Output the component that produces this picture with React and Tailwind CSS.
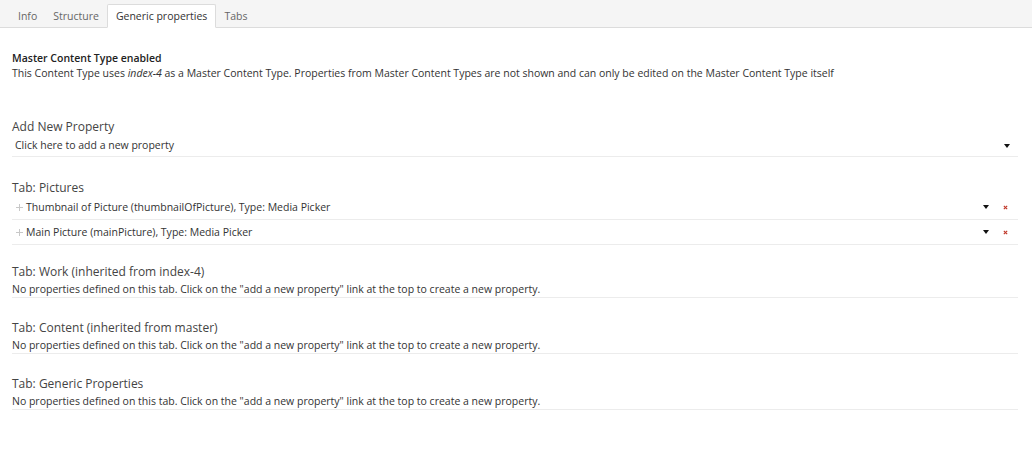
import React from 'react';

const tabs = ['Info', 'Structure', 'Generic properties', 'Tabs'];

const emptyTabs = [
  'Tab: Work (inherited from index-4)',
  'Tab: Content (inherited from master)',
  'Tab: Generic Properties',
];

const Caret = () => (
  <svg className="w-[6px] h-[4px]" viewBox="0 0 6 4"><path d="M0 0h6L3 4z" fill="#111" /></svg>
);

const Remove = () => (
  <svg className="w-[5px] h-[5px]" viewBox="0 0 6 6"><path d="M1 1l4 4M5 1L1 5" stroke="#c0392b" strokeWidth="1.4" /></svg>
);

const Grip = () => (
  <svg className="w-[7px] h-[7px]" viewBox="0 0 7 7"><path d="M3.5 0v7M0 3.5h7" stroke="#c8c8c8" strokeWidth="1" /></svg>
);

const PropertyRow = ({ label }) => (
  <div className="flex items-center h-[25px] border-b border-[#ececec] pl-[4px] pr-[10px]">
    <Grip />
    <span className="ml-[3px] flex-1">{label}</span>
    <Caret />
    <span className="ml-[14px]"><Remove /></span>
  </div>
);

export default function App() {
  return (
    <div className="w-[1032px] h-[470px] bg-white text-[10.5px] text-[#333] font-['Open_Sans',sans-serif] leading-[15px]">
      <div className="flex items-end h-[28px] bg-[#f5f5f5] border-b border-[#dcdcdc] pl-[10px]">
        {tabs.map((t) => (
          <div
            key={t}
            className={`px-[8px] h-[24px] flex items-center -mb-px ${
              t === 'Generic properties'
                ? 'bg-white border border-[#dcdcdc] border-b-white rounded-t-[2px] text-[#333]'
                : 'text-[#666]'
            }`}
          >
            {t}
          </div>
        ))}
      </div>

      <div className="px-[12px] pr-[14px]">
        <div className="pt-[23px]">
          <div className="font-semibold text-[#222]">Master Content Type enabled</div>
          <div>
            This Content Type uses <em>index-4</em> as a Master Content Type. Properties from Master Content Types are not shown and can only be edited on the Master Content Type itself
          </div>
        </div>

        <div className="mt-[37px]">
          <div className="text-[12px] leading-[17px] text-[#444]">Add New Property</div>
          <div className="flex items-center h-[22px] border-b border-[#ececec] pl-[3px] pr-[8px]">
            <span className="flex-1">Click here to add a new property</span>
            <Caret />
          </div>
        </div>

        <div className="mt-[24px]">
          <div className="text-[12px] leading-[14px] text-[#444]">Tab: Pictures</div>
          <PropertyRow label="Thumbnail of Picture (thumbnailOfPicture), Type: Media Picker" />
          <PropertyRow label="Main Picture (mainPicture), Type: Media Picker" />
        </div>

        {emptyTabs.map((t, i) => (
          <div key={t} className={i === 0 ? 'mt-[18px]' : 'mt-[21px]'}>
            <div className="text-[12px] leading-[18px] text-[#444]">{t}</div>
            <div className="leading-[16px] border-b border-[#ececec]">
              No properties defined on this tab. Click on the "add a new property" link at the top to create a new property.
            </div>
          </div>
        ))}
      </div>
    </div>
  );
}
